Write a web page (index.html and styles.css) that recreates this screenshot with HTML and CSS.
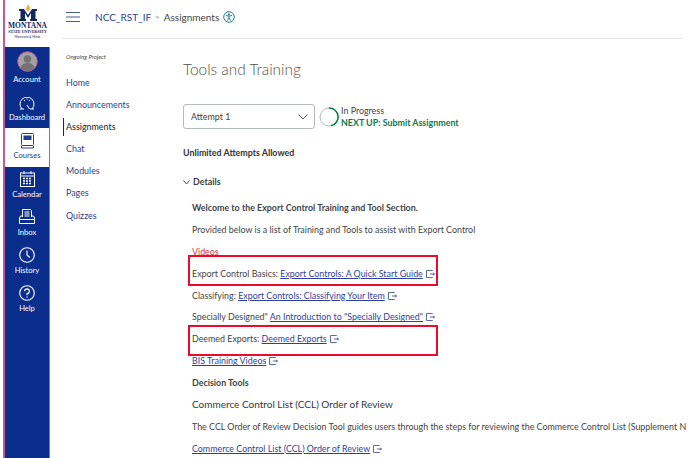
FILE: index.html
```html
<!DOCTYPE html>
<html lang="en">
<head>
<meta charset="utf-8">
<title>Tools and Training</title>
<link rel="stylesheet" href="styles.css">
</head>
<body>
<div class="page">
  <nav class="rail">
    <div class="logo">
      <svg class="logo-m" width="18" height="17" viewBox="0 0 18 17"><path d="M9 0c1 2 2.500 3 2 5.500L9 8 7 5.500C6.500 3.500 8.500 2.500 9 0z" fill="#e3b54a"/><path d="M0 5h5l4 6 4-6h5v2h-1.500v8H18v2h-7v-2h1V9l-3 5-3-5v6h1v2H0v-2h1.500V7H0z" fill="#12285f"/></svg>
      <div class="logo-name">MONTANA</div>
      <div class="logo-sub">STATE UNIVERSITY</div>
      <div class="logo-tag">Mountains &amp; Minds</div>
    </div>
    <div class="rail-group">
      <a class="rail-item rail-account">
        <svg width="21" height="21" viewBox="0 0 21 21"><circle cx="10.500" cy="10.500" r="9.800" fill="#a2a2a4" stroke="#c84f92"/><circle cx="10.500" cy="8" r="3.800" fill="#737376"/><path d="M3.500 17c1-4 4-5 7-5s6 1 7 5a9.500 9.500 0 0 1-14 0z" fill="#737376"/></svg>
        <span>Account</span>
      </a>
      <a class="rail-item rail-dash">
        <svg width="16" height="13" viewBox="0 0 16 13" fill="none" stroke="#fff"><path d="M3 12A7 7 0 1 1 13 12"/><path d="M1 12h4M11 12h4M8 8l2.500 4"/><path d="M5 3l1 1M11 3l-1 1M8 1.500v1"/></svg>
        <span>Dashboard</span>
      </a>
    </div>
    <a class="rail-item rail-current">
      <svg width="13" height="16" viewBox="0 0 13 16" fill="none" stroke="#1f3f8f"><rect x=".5" y=".5" width="12" height="12" rx="1"/><rect x="3" y="3" width="7" height="3.500" fill="#1f3f8f"/><path d="M.5 13v2h12v-2"/></svg>
      <span>Courses</span>
    </a>
    <div class="rail-group rail-rest">
      <a class="rail-item">
        <svg width="15" height="16" viewBox="0 0 15 16" fill="none" stroke="#fff"><rect x=".5" y="2" width="14" height="13.500"/><path d="M.5 5h14M4 0v3M11 0v3"/><path d="M3 7.500h9M3 10h9M3 12.500h9" stroke-width="1.500" stroke-dasharray="2 1"/></svg>
        <span>Calendar</span>
      </a>
      <a class="rail-item rail-inbox">
        <svg width="16" height="15" viewBox="0 0 16 15" fill="none" stroke="#fff"><path d="M3.500 8V.5h8l1 1V8M5.500 3h5M5.500 5h5M5.500 7h5"/><path d="M3.500 7H1.500L.5 9v5.500h15V9l-1-2h-2M.5 10.500h15"/></svg>
        <span>Inbox</span>
      </a>
      <a class="rail-item">
        <svg width="16" height="16" viewBox="0 0 16 16" fill="none" stroke="#fff" stroke-width="1.100"><circle cx="8" cy="8" r="7.300"/><path d="M8 3.500V8l2.800 2.500"/></svg>
        <span>History</span>
      </a>
      <a class="rail-item">
        <svg width="16" height="16" viewBox="0 0 16 16" fill="none" stroke="#fff" stroke-width="1.100"><circle cx="8" cy="8" r="7.300"/><path d="M5.700 6.200A2.300 2.300 0 1 1 8 8.500v1.700M8 11.500v1.200"/></svg>
        <span>Help</span>
      </a>
    </div>
  </nav>
  <div class="main">
    <header class="topbar">
      <svg class="burger" width="14" height="10" viewBox="0 0 14 10" stroke="#4a5a8f"><path d="M0 .5h14M0 5h14M0 9.500h14"/></svg>
      <a class="crumb">NCC_RST_IF</a>
      <span class="crumb-sep">&gt;</span>
      <span class="crumb-page">Assignments</span>
      <svg class="a11y" width="12" height="12" viewBox="0 0 12 12" fill="none" stroke="#1b7f95"><circle cx="6" cy="6" r="5.300"/><circle cx="6" cy="3.300" r=".6" fill="#1b7f95"/><path d="M3 4.500l3 .6 3-.6M6 5v2L4.500 9.500M6 7l1.500 2.500"/></svg>
    </header>
    <div class="body">
      <aside class="course-nav">
        <div class="term">Ongoing Project</div>
        <a class="nav-link">Home</a>
        <a class="nav-link">Announcements</a>
        <a class="nav-link nav-active">Assignments</a>
        <a class="nav-link">Chat</a>
        <a class="nav-link">Modules</a>
        <a class="nav-link">Pages</a>
        <a class="nav-link">Quizzes</a>
      </aside>
      <main class="content">
        <h1 class="title">Tools and Training</h1>
        <div class="attempt-row">
          <div class="select">
            <span>Attempt 1</span>
            <svg width="10" height="6" viewBox="0 0 10 6" fill="none" stroke="#555"><path d="M.5.500L5 5 9.500.500"/></svg>
          </div>
          <svg class="progress" width="20" height="20" viewBox="0 0 20 20" fill="none"><circle cx="10" cy="10" r="9" stroke="#b5bcb8"/><path d="M10 1a9 9 0 0 1 2 17.800" stroke="#0b8043" stroke-width="1.500"/></svg>
          <div class="status">
            <div class="status-label">In Progress</div>
            <div class="status-next">NEXT UP: Submit Assignment</div>
          </div>
        </div>
        <div class="attempts">Unlimited Attempts Allowed</div>
        <div class="details-head">
          <svg width="7" height="5" viewBox="0 0 7 5" fill="none" stroke="#444"><path d="M.5.500L3.500 4 6.500.500"/></svg>
          <span>Details</span>
        </div>
        <div class="details">
          <p class="row strong">Welcome to the Export Control Training and Tool Section.</p>
          <p class="row">Provided below is a list of Training and Tools to assist with Export Control</p>
          <p class="row red">Videos</p>
          <p class="row">Export Control Basics: <a class="link">Export Controls: A Quick Start Guide</a><svg class="ext" width="9" height="8" viewBox="0 0 9 8" fill="none" stroke="#4a58a0" stroke-width=".9"><path d="M6.500 1V.5H.5v7h6V7M4 4h4.500M7 2.800L8.500 4 7 5.200"/></svg><span class="redbox redbox-a"></span></p>
          <p class="row">Classifying: <a class="link">Export Controls: Classifying Your Item</a><svg class="ext" width="9" height="8" viewBox="0 0 9 8" fill="none" stroke="#4a58a0" stroke-width=".9"><path d="M6.500 1V.5H.5v7h6V7M4 4h4.500M7 2.800L8.500 4 7 5.200"/></svg></p>
          <p class="row">Specially Designed" <a class="link">An Introduction to "Specially Designed"</a><svg class="ext" width="9" height="8" viewBox="0 0 9 8" fill="none" stroke="#4a58a0" stroke-width=".9"><path d="M6.500 1V.5H.5v7h6V7M4 4h4.500M7 2.800L8.500 4 7 5.200"/></svg></p>
          <p class="row">Deemed Exports: <a class="link">Deemed Exports</a><svg class="ext" width="9" height="8" viewBox="0 0 9 8" fill="none" stroke="#4a58a0" stroke-width=".9"><path d="M6.500 1V.5H.5v7h6V7M4 4h4.500M7 2.800L8.500 4 7 5.200"/></svg><span class="redbox redbox-b"></span></p>
          <p class="row"><a class="link">BIS Training Videos</a><svg class="ext" width="9" height="8" viewBox="0 0 9 8" fill="none" stroke="#4a58a0" stroke-width=".9"><path d="M6.500 1V.5H.5v7h6V7M4 4h4.500M7 2.800L8.500 4 7 5.200"/></svg></p>
          <p class="row strong">Decision Tools</p>
          <p class="row sub">Commerce Control List (CCL) Order of Review</p>
          <p class="row">The CCL Order of Review Decision Tool guides users through the steps for reviewing the Commerce Control List (Supplement N</p>
          <p class="row"><a class="link">Commerce Control List (CCL) Order of Review</a><svg class="ext" width="9" height="8" viewBox="0 0 9 8" fill="none" stroke="#4a58a0" stroke-width=".9"><path d="M6.500 1V.5H.5v7h6V7M4 4h4.500M7 2.800L8.500 4 7 5.200"/></svg></p>
        </div>
      </main>
    </div>
  </div>
</div>
</body>
</html>
```

FILE: styles.css
```css
* { box-sizing: border-box; }
html, body { margin: 0; height: 100%; overflow: hidden; background: #fff; }
body { font-family: Lato, "Open Sans", sans-serif; font-size: 8.900px; color: #3f4447; }
p, h1 { margin: 0; }

.page { display: flex; width: 689px; height: 458px; }

.rail { width: 47px; flex: none; margin-left: 3px; border-left: 2px solid #c4559a; border-right: 1px solid #5f7fc4; display: flex; flex-direction: column; }
.logo { height: 47px; padding-top: 4px; display: flex; flex-direction: column; align-items: center; color: #12285f; background: #fff; margin-right: -1px; }
.logo-m { display: block; }
.logo-name { font-family: "Liberation Serif", serif; font-weight: 700; font-size: 7.500px; line-height: 7px; margin-top: 1px; }
.logo-sub { font-family: "Liberation Serif", serif; font-weight: 700; font-size: 4px; line-height: 5px; white-space: nowrap; }
.logo-tag { font-size: 3px; line-height: 6px; white-space: nowrap; }

.rail-group { background: #0b2d8c; display: flex; flex-direction: column; height: 81px; }
.rail-rest { flex: 1; padding-top: 4px; }
.rail-item { display: flex; flex-direction: column; align-items: center; gap: 2px; color: #fff; font-size: 7.600px; line-height: 11px; height: 38px; }
.rail-item svg { flex: none; }
.rail-account { height: 36px; margin-top: 4px; }
.rail-dash { height: 27px; margin-top: 10px; }
.rail-inbox { gap: 3px; }
.rail-current { background: #fff; color: #1f3f8f; height: 39px; padding-top: 5px; gap: 1px; flex: none; }

.main { flex: 1; min-width: 0; display: flex; flex-direction: column; padding-right: 6px; }
.topbar { height: 39px; flex: none; margin-left: 12px; border-bottom: 1px solid #e6e8ea; display: flex; align-items: center; font-size: 10px; padding-bottom: 5px; }
.burger { margin-left: 4px; margin-right: 15px; }
.crumb { color: #2d3f8f; }
.crumb-sep { color: #888; margin: 0 4px; font-size: 8px; }
.crumb-page { color: #444; }
.a11y { margin-left: 4px; }

.body { flex: 1; display: flex; min-height: 0; }
.course-nav { width: 133px; flex: none; padding: 12px 0 0 13px; display: flex; flex-direction: column; }
.term { font-size: 6px; font-style: italic; color: #444; line-height: 12px; margin-bottom: 8.500px; margin-left: 3px; }
.nav-link { color: #2d3f8f; line-height: 22.200px; height: 22.200px; margin-left: 3px; }
.nav-active { color: #2b2f33; font-weight: 500; position: relative; }
.nav-active::before { content: ""; position: absolute; left: -3.500px; top: 2px; bottom: 2px; width: 1px; background: #22262a; }

.content { flex: 1; min-width: 0; }
.title { font-size: 15.400px; font-weight: 300; color: #55504a; line-height: 24px; margin-top: 18px; }
.attempt-row { display: flex; align-items: center; margin-top: 23px; }
.select { width: 132px; height: 25px; border: 1px solid #b5bac0; border-radius: 3px; display: flex; align-items: center; justify-content: space-between; padding: 0 6px 0 7px; color: #444; }
.progress { margin: 0 2px 0 4px; }
.status { line-height: 12px; }
.status-label { color: #444; }
.status-next { color: #0b7a4b; font-weight: 700; }
.attempts { margin-top: 18px; line-height: 12px; font-weight: 700; color: #333; }
.details-head { margin-top: 17px; line-height: 12px; display: flex; align-items: center; gap: 3px; font-weight: 700; color: #3a3f44; }
.details { padding: 13px 0 0 9px; }
.row { height: 21.900px; line-height: 13px; white-space: nowrap; position: relative; }
.strong { font-weight: 700; }
.red { color: #d8343a; }
.sub { font-size: 10px; color: #33383b; }
.link { color: #2d3f9f; text-decoration: underline; }
.ext { margin-left: 3px; vertical-align: -1px; }
.redbox { position: absolute; left: -4px; width: 250px; height: 31px; border: 2px solid #ee0a2a; pointer-events: none; }
.redbox-a { top: -12px; }
.redbox-b { top: -7px; }
```
